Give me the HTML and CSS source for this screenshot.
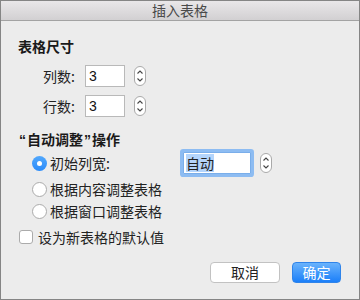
FILE: index.html
```html
<!DOCTYPE html>
<html lang="zh">
<head>
  <meta charset="UTF-8">
  <title>插入表格</title>
  <link rel="stylesheet" href="styles.css">
</head>
<body>
  <div class="window">
    <div class="titlebar">插入表格</div>

    <div class="content">
      <div class="heading first">表格尺寸</div>

      <div class="size-row">
        <span class="size-label">列数:</span>
        <span class="field">3</span>
        <svg class="stepper" width="12" height="20" viewBox="0 0 12 20">
          <rect x="0.5" y="0.5" width="11" height="19" rx="5.5" fill="#fff" stroke="#a9a9a9"/>
          <path d="M3.5 7.5 L6 5 L8.5 7.5 M3.5 12.5 L6 15 L8.5 12.5" fill="none" stroke="#444" stroke-width="1.1"/>
        </svg>
      </div>
      <div class="size-row">
        <span class="size-label">行数:</span>
        <span class="field">3</span>
        <svg class="stepper" width="12" height="20" viewBox="0 0 12 20">
          <rect x="0.5" y="0.5" width="11" height="19" rx="5.5" fill="#fff" stroke="#a9a9a9"/>
          <path d="M3.5 7.5 L6 5 L8.5 7.5 M3.5 12.5 L6 15 L8.5 12.5" fill="none" stroke="#444" stroke-width="1.1"/>
        </svg>
      </div>

      <div class="heading second"><span class="quote">“</span>自动调整<span class="quote">”</span>操作</div>

      <div class="option option-main">
        <span class="radio checked"></span>
        <span class="option-text">初始列宽:</span>
        <span class="auto-field"><span class="selected">自动</span></span>
        <svg class="stepper" width="12" height="20" viewBox="0 0 12 20">
          <rect x="0.5" y="0.5" width="11" height="19" rx="5.5" fill="#fff" stroke="#a9a9a9"/>
          <path d="M3.5 7.5 L6 5 L8.5 7.5 M3.5 12.5 L6 15 L8.5 12.5" fill="none" stroke="#444" stroke-width="1.1"/>
        </svg>
      </div>
      <div class="option">
        <span class="radio"></span>
        <span class="option-text">根据内容调整表格</span>
      </div>
      <div class="option">
        <span class="radio"></span>
        <span class="option-text">根据窗口调整表格</span>
      </div>

      <div class="check-row">
        <span class="checkbox"></span>
        <span class="option-text">设为新表格的默认值</span>
      </div>

      <div class="buttons">
        <button class="btn cancel">取消</button>
        <button class="btn ok">确定</button>
      </div>
    </div>
  </div>
</body>
</html>
```

FILE: styles.css
```css
body {
  margin: 0;
  padding: 0;
  font-family: "Noto Sans CJK SC", "Liberation Sans", sans-serif;
  font-size: 14px;
  color: #222;
  background-color: #ececec;
}

.window {
  width: 360px;
  height: 300px;
  box-sizing: border-box;
  border: 1px solid #858585;
  background-color: #ececec;
}

.titlebar {
  height: 19px;
  line-height: 19px;
  text-align: center;
  color: #4a4a4a;
  font-size: 14px;
  background: linear-gradient(#e9e7e9, #d2d0d2);
  border-bottom: 1px solid #a3a3a3;
}

.content {
  padding: 0 0 0 17px;
}

.heading {
  height: 18px;
  line-height: 18px;
  font-weight: bold;
  color: #1a1a1a;
}

.quote {
  font-family: "Liberation Sans", sans-serif;
  padding: 0 1px;
}

.heading.first {
  margin-top: 16px;
  margin-bottom: 10px;
}

.heading.second {
  margin-top: 13px;
}

.size-row {
  display: flex;
  align-items: center;
  height: 22px;
  margin-bottom: 8px;
  padding-left: 25px;
}

.size-label {
  width: 42px;
}

.field {
  width: 40px;
  height: 22px;
  box-sizing: border-box;
  border: 1px solid #b9b9b9;
  background: #fff;
  padding-left: 3px;
  line-height: 20px;
  font-family: "Liberation Sans", sans-serif;
  font-size: 14px;
  color: #111;
}

.size-row .stepper {
  margin-left: 9px;
}

.option {
  display: flex;
  align-items: center;
  height: 22px;
  padding-left: 14px;
}

.option-main {
  height: 30px;
}

.radio {
  width: 15px;
  height: 15px;
  box-sizing: border-box;
  border-radius: 50%;
  border: 1px solid #ababab;
  background: #fff;
  position: relative;
  margin-right: 3px;
}

.radio.checked {
  border: none;
  background: linear-gradient(#52a8fc, #2a8bfa);
}

.radio.checked::after {
  content: "";
  position: absolute;
  left: 5px;
  top: 5px;
  width: 5px;
  height: 5px;
  border-radius: 50%;
  background: #fff;
}

.option-main .option-text {
  width: 133px;
}

.auto-field {
  width: 68px;
  height: 22px;
  box-sizing: border-box;
  background: #fff;
  border: 1px solid #7aaeea;
  box-shadow: 0 0 0 3px #8dbcf2;
  border-radius: 1px;
  padding-left: 2px;
  display: flex;
  align-items: center;
}

.selected {
  background: #b4d5fc;
  line-height: 18px;
  color: #222;
}

.option-main .stepper {
  margin-left: 9px;
}

.check-row {
  display: flex;
  align-items: center;
  height: 22px;
  margin-top: 4px;
  padding-left: 1px;
}

.checkbox {
  width: 14px;
  height: 14px;
  box-sizing: border-box;
  border: 1px solid #ababab;
  border-radius: 3px;
  background: #fff;
  margin-right: 5px;
}

.buttons {
  display: flex;
  justify-content: flex-end;
  gap: 12px;
  margin-top: 14px;
  padding-right: 18px;
}

.btn {
  height: 21px;
  padding: 0;
  font-family: "Noto Sans CJK SC", sans-serif;
  font-size: 14px;
  line-height: 19px;
  border-radius: 4px;
}

.cancel {
  width: 70px;
  background: #fff;
  border: 1px solid #c2c2c2;
  color: #222;
}

.ok {
  width: 49px;
  background: linear-gradient(#6ab3fc, #1b7ff9);
  border: 1px solid #2f84ea;
  color: #fff;
}
```
